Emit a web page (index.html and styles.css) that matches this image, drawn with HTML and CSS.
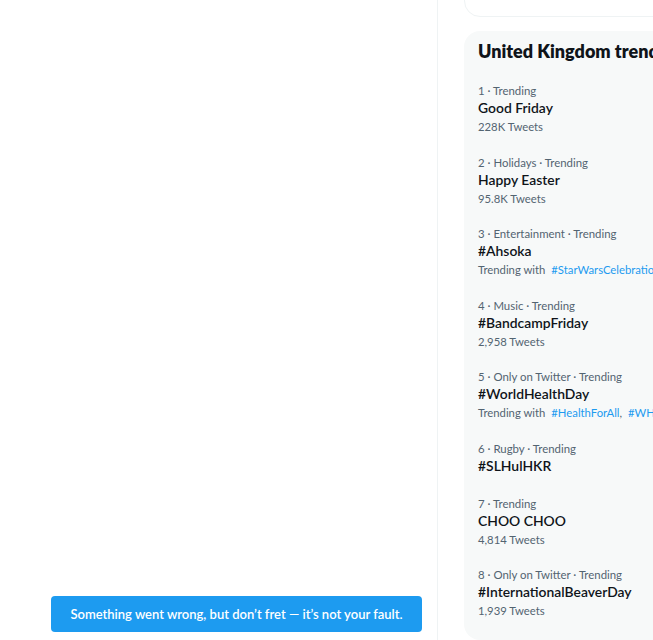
FILE: index.html
```html
<!DOCTYPE html>
<html>
<head>
<meta charset="utf-8">
<link rel="stylesheet" href="styles.css">
</head>
<body>
<div class="layout">
  <main class="primary"></main>
  <aside class="sidebar">
    <div class="search-box"></div>
    <section class="trends">
      <h2 class="trends-title">United Kingdom trends</h2>
      <div class="trend">
        <div class="meta">1 · Trending</div>
        <div class="name">Good Friday</div>
        <div class="count">228K Tweets</div>
      </div>
      <div class="trend">
        <div class="meta">2 · Holidays · Trending</div>
        <div class="name">Happy Easter</div>
        <div class="count">95.8K Tweets</div>
      </div>
      <div class="trend">
        <div class="meta">3 · Entertainment · Trending</div>
        <div class="name">#Ahsoka</div>
        <div class="count">Trending with <a class="tag">#StarWarsCelebration</a></div>
      </div>
      <div class="trend">
        <div class="meta">4 · Music · Trending</div>
        <div class="name">#BandcampFriday</div>
        <div class="count">2,958 Tweets</div>
      </div>
      <div class="trend">
        <div class="meta">5 · Only on Twitter · Trending</div>
        <div class="name">#WorldHealthDay</div>
        <div class="count">Trending with <a class="tag">#HealthForAll</a>, <a class="tag">#WHO75</a></div>
      </div>
      <div class="trend trend-short">
        <div class="meta">6 · Rugby · Trending</div>
        <div class="name">#SLHulHKR</div>
      </div>
      <div class="trend">
        <div class="meta">7 · Trending</div>
        <div class="name">CHOO CHOO</div>
        <div class="count">4,814 Tweets</div>
      </div>
      <div class="trend">
        <div class="meta">8 · Only on Twitter · Trending</div>
        <div class="name">#InternationalBeaverDay</div>
        <div class="count">1,939 Tweets</div>
      </div>
    </section>
  </aside>
</div>
<div class="toast">Something went wrong, but don’t fret — it’s not your fault.</div>
</body>
</html>
```
FILE: styles.css
```css
html, body {
  margin: 0;
  padding: 0;
  background: #ffffff;
  font-family: Lato, "Noto Sans", sans-serif;
  color: #0f1419;
  overflow: hidden;
}
.layout {
  display: flex;
  height: 640px;
  overflow: hidden;
}
.primary {
  width: 437px;
  flex: none;
  border-right: 1px solid #eff3f4;
}
.sidebar {
  flex: none;
  width: 350px;
  padding-left: 26px;
  display: flex;
  flex-direction: column;
  gap: 14px;
}
.search-box {
  height: 40px;
  margin-top: -23px;
  border: 1px solid #eff3f4;
  border-radius: 16px;
}
.trends {
  background: #f7f9f9;
  border-radius: 16px;
  height: 640px;
}
.trends-title {
  margin: 0;
  padding: 8px 14px 10px;
  font-size: 18px;
  line-height: 24px;
  font-weight: 800;
  white-space: nowrap;
}
.trend {
  padding: 10px 14px 9.5px;
}
.trend-short {
  padding-bottom: 11px;
}
.meta {
  font-size: 11.4px;
  line-height: 16px;
  color: #536471;
}
.name {
  font-size: 13.9px;
  line-height: 18px;
  font-weight: 600;
}
.count {
  margin-top: 2px;
  font-size: 11.3px;
  line-height: 16px;
  color: #536471;
  white-space: nowrap;
}
.tag {
  color: #1d9bf0;
  margin-left: 3px;
}
.toast {
  position: fixed;
  left: 51px;
  bottom: 8px;
  width: 371px;
  height: 36px;
  border-radius: 4px;
  background: #1d9bf0;
  color: #fff;
  font-size: 13px;
  font-weight: 600;
  white-space: nowrap;
  display: flex;
  align-items: center;
  justify-content: center;
}
```
